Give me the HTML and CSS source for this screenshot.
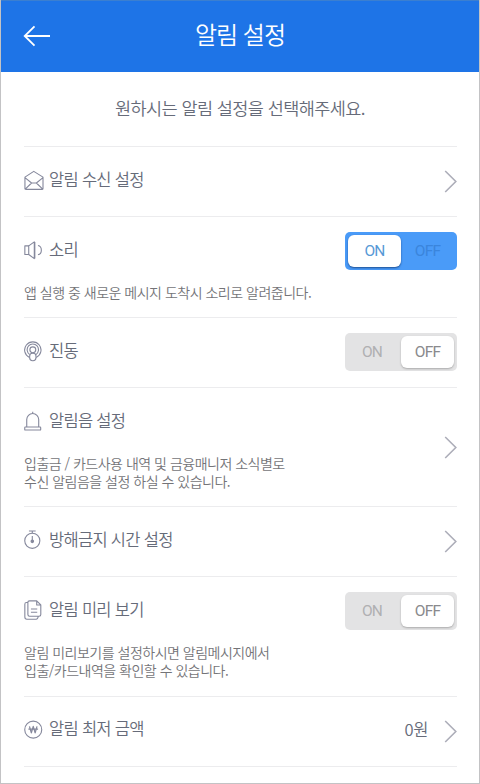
FILE: index.html
```
<!DOCTYPE html>
<html lang="ko">
<head>
    <meta charset="UTF-8">
    <meta name="viewport" content="width=device-width, initial-scale=1.0">
    <title>알림 설정</title>
    <link rel="stylesheet" href="styles.css">
</head>
<body>
    <div class="screen">
        <header class="header">
            <a href="#" class="back" aria-label="뒤로">
                <svg width="28" height="22" viewBox="0 0 28 22"><path d="M11.5 1.3 1.7 11l9.8 9.7M2 11h25"/></svg>
            </a>
            <h1>알림 설정</h1>
        </header>

        <p class="guide">원하시는 알림 설정을 선택해주세요.</p>

        <ul class="settings">
            <li class="row">
                <div class="row-main">
                    <h2 class="label">
                        <svg class="icon" viewBox="0 0 20 20"><path d="M.9 6.8 9.3 1.3l8.8 5.5v10.7q0 1-1 1H1.9q-1 0-1-1zM.9 7.3l6.3 5.1h4.6l6.3-5.1M1.4 18l5.8-5.6M17.6 18l-5.8-5.6"/></svg>
                        <span>알림 수신 설정</span>
                    </h2>
                </div>
                <svg class="chevron" viewBox="0 0 13 23"><path d="M1.2 1 11.8 11.5 1.2 22"/></svg>
            </li>

            <li class="row">
                <div class="row-main">
                    <h2 class="label">
                        <svg class="icon" viewBox="0 0 20 20"><path d="M.8 5.6h3.7v8.2H.8zM4.5 5.6l5.3-3.8v15.9l-5.3-3.9M10.3 2v15.5M13.3 5.3c4.3.8 4.3 8 0 8.8"/></svg>
                        <span>소리</span>
                    </h2>
                    <p class="desc">앱 실행 중 새로운 메시지 도착시 소리로 알려줍니다.</p>
                </div>
                <div class="toggle is-on"><span class="on">ON</span><span class="off">OFF</span></div>
            </li>

            <li class="row">
                <div class="row-main">
                    <h2 class="label">
                        <svg class="icon" viewBox="0 0 20 20"><path d="M5.2 15.7a7.8 7.8 0 1 1 6.4 0M5.4 12.8a5.4 5.4 0 1 1 6 0"/><circle cx="8.4" cy="8.4" r="2.8"/><rect x="5.4" y="11.6" width="6" height="7.2" rx="2.8"/></svg>
                        <span>진동</span>
                    </h2>
                </div>
                <div class="toggle"><span class="on">ON</span><span class="off">OFF</span></div>
            </li>

            <li class="row">
                <div class="row-main">
                    <h2 class="label">
                        <svg class="icon" viewBox="0 0 20 20"><path d="M2.6 15.3V8.2a5.7 5.8 0 0 1 11.4 0v7.1M8.3 2.3V.7"/><rect x=".7" y="15.3" width="15.2" height="2.8" rx=".6"/></svg>
                        <span>알림음 설정</span>
                    </h2>
                    <p class="desc">입출금 / 카드사용 내역 및 금융매니저 소식별로<br>수신 알림음을 설정 하실 수 있습니다.</p>
                </div>
                <svg class="chevron" viewBox="0 0 13 23"><path d="M1.2 1 11.8 11.5 1.2 22"/></svg>
            </li>

            <li class="row">
                <div class="row-main">
                    <h2 class="label">
                        <svg class="icon" viewBox="0 0 20 20"><circle cx="7.9" cy="10.3" r="7.2"/><path d="M4.7.9h6.4M7.9.9v2.2M7.9 5.7v5"/><circle class="fill" cx="7.9" cy="10.8" r="1.2"/></svg>
                        <span>방해금지 시간 설정</span>
                    </h2>
                </div>
                <svg class="chevron" viewBox="0 0 13 23"><path d="M1.2 1 11.8 11.5 1.2 22"/></svg>
            </li>

            <li class="row">
                <div class="row-main">
                    <h2 class="label">
                        <svg class="icon" viewBox="0 0 20 20"><path d="M5.3.8h6.8L16 4.7v9.2q0 1.6-1.6 1.6H5.3q-1.6 0-1.6-1.6V2.4Q3.7.8 5.3.8zM12.1.8v3.9H16M3.7 2.4H2.4Q.8 2.4.8 4v12.3q0 2 2 2h8.8q1.6 0 2-2.8M6.6 8.6h6M6.6 11.6h6"/></svg>
                        <span>알림 미리 보기</span>
                    </h2>
                    <p class="desc">알림 미리보기를 설정하시면 알림메시지에서<br>입출/카드내역을 확인할 수 있습니다.</p>
                </div>
                <div class="toggle"><span class="on">ON</span><span class="off">OFF</span></div>
            </li>

            <li class="row">
                <div class="row-main">
                    <h2 class="label">
                        <svg class="icon" viewBox="0 0 20 20"><circle cx="8.8" cy="9.2" r="8.1"/><path class="won" d="m5.2 6.1 1.8 6.1 1.8-6.1 1.8 6.1 1.8-6.1M4.2 8.7h9.2"/></svg>
                        <span>알림 최저 금액</span>
                    </h2>
                </div>
                <span class="value">0원</span>
                <svg class="chevron" viewBox="0 0 13 23"><path d="M1.2 1 11.8 11.5 1.2 22"/></svg>
            </li>
        </ul>
    </div>
</body>
</html>
```
FILE: styles.css
```
* {
    margin: 0;
    padding: 0;
    box-sizing: border-box;
}

body {
    font-family: "Noto Sans CJK KR", sans-serif;
    font-weight: 350;
    background: #fff;
    color: #666b79;
}

.screen {
    height: 784px;
    border: 1px solid #c3c3c5;
    border-top: 0;
    overflow: hidden;
}

.header {
    display: grid;
    grid-template-columns: 60px 1fr 60px;
    align-items: center;
    height: 72px;
    margin: 0 -1px;
    padding: 0 1px;
    background: #1e74e7;
    border: 1px solid #3b7fd0;
    border-bottom: 0;
    color: #fff;
}

.back {
    padding: 0 0 1px 21px;
}

.back svg {
    display: block;
    fill: none;
    stroke: #fff;
    stroke-width: 1.8;
}

.header h1 {
    font-size: 24px;
    font-weight: 350;
    line-height: 1;
    text-align: center;
    letter-spacing: -1px;
    padding-bottom: 5px;
}

.guide {
    height: 74px;
    line-height: 72px;
    font-size: 17.5px;
    letter-spacing: -0.58px;
    text-align: center;
}

.settings {
    list-style: none;
    margin: 0 22px 0 23px;
    border-bottom: 1px solid #ececee;
}

.row {
    display: flex;
    align-items: center;
    border-top: 1px solid #ececee;
    min-height: 70px;
}

.row-main {
    flex: 1;
    align-self: flex-start;
}

.label {
    display: flex;
    align-items: center;
    height: 63px;
    font-size: 16.5px;
    font-weight: 350;
    letter-spacing: -0.7px;
}

.icon {
    width: 21px;
    height: 21px;
    margin: 4px 4.5px 0 -0.5px;
    fill: none;
    stroke: #85889c;
    stroke-width: 1.05;
    stroke-linejoin: round;
}

.icon .fill {
    fill: #85889c;
}

.icon .won {
    stroke-width: 1.2;
}

.desc {
    padding-bottom: 16.2px;
    font-size: 14px;
    line-height: 18px;
    letter-spacing: -0.5px;
    color: #747478;
    margin-top: 3px;
}

.chevron {
    width: 13px;
    height: 23px;
    fill: none;
    stroke: #adaeb9;
    stroke-width: 1.6;
}

.value {
    margin-right: 16px;
    font-size: 16.5px;
    letter-spacing: -0.4px;
    padding-bottom: 4px;
}

.toggle {
    display: flex;
    align-self: flex-start;
    width: 112px;
    height: 38px;
    margin-top: 15px;
    padding: 3px;
    border-radius: 5px;
    background: #e3e3e4;
    color: #b0b0b2;
    font-family: Roboto, sans-serif;
    font-weight: 400;
    font-size: 15.5px;
    letter-spacing: -0.8px;
    line-height: 33px;
    text-align: center;
}

.toggle span {
    flex: none;
    width: 53px;
    height: 32px;
    border-radius: 6px;
}

.toggle:not(.is-on) .on {
    padding-right: 5px;
}

.toggle:not(.is-on) .off {
    background: #fff;
    color: #8a8a8d;
    box-shadow: 0 1px 2px rgba(0, 0, 0, 0.25);
}

.toggle.is-on {
    background: #4a9bf8;
    color: #3a85dc;
}

.toggle.is-on .on {
    background: #fff;
    color: #5799d6;
    box-shadow: 0 1px 2px rgba(0, 30, 80, 0.6);
}
```
